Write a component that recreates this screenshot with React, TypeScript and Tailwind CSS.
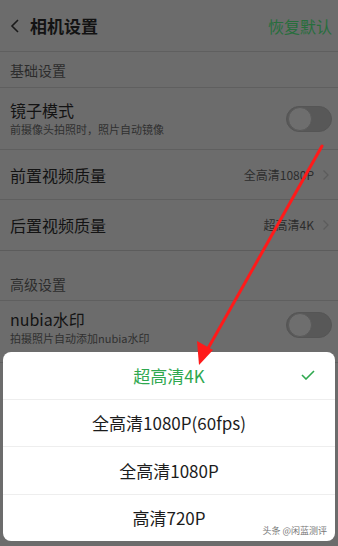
import React from "react";

// dimmed settings page with quality picker sheet on top

function Toggle() {
  return (
    <div className="w-[46px] h-[26px] rounded-full bg-[#585858] border border-[#555] flex items-center p-[1px]">
      <div className="w-[24px] h-[24px] rounded-full bg-[#6e6e6e] border border-[#5a5a5a]" />
    </div>
  );
}

function Chevron() {
  return (
    <svg width="8" height="12" viewBox="0 0 8 12" className="ml-[8px]">
      <path d="M1.5 1.5 L6 6 L1.5 10.5" fill="none" stroke="#5c5c5c" strokeWidth="1.3" />
    </svg>
  );
}

export default function App() {
  const options = [
    { label: "超高清4K", active: true },
    { label: "全高清1080P(60fps)", active: false },
    { label: "全高清1080P", active: false },
    { label: "高清720P", active: false },
  ];

  return (
    <div
      className="relative w-[338px] h-[546px] overflow-hidden bg-[#6c6c6c] text-[#131313]"
      style={{ fontFamily: '"Noto Sans CJK SC", "Noto Sans", sans-serif' }}
    >
      {/* header */}
      <div className="h-[52px] flex items-center justify-between pl-[10px] pr-[6px] border-b border-[#5f5f5f]">
        <div className="flex items-center gap-[10px]">
          <svg width="10" height="16" viewBox="0 0 10 16">
            <path d="M8 2 L2 8 L8 14" fill="none" stroke="#1a1a1a" strokeWidth="1.6" />
          </svg>
          <span className="text-[17px] font-bold leading-none">相机设置</span>
        </div>
        <span className="text-[16px] text-[#276e3c] leading-none">恢复默认</span>
      </div>

      {/* basic */}
      <div className="h-[36px] flex items-center px-[10px] border-b border-[#5f5f5f]">
        <span className="text-[14px] text-[#2c2c2c] leading-none">基础设置</span>
      </div>
      <div className="h-[62px] flex items-center justify-between pl-[10px] pr-[6px] border-b border-[#5f5f5f]">
        <div className="flex flex-col gap-[6px]">
          <span className="text-[16px] leading-none">镜子模式</span>
          <span className="text-[11px] text-[#303030] leading-none">前摄像头拍照时，照片自动镜像</span>
        </div>
        <Toggle />
      </div>
      <div className="h-[50px] flex items-center justify-between pl-[10px] pr-[8px] border-b border-[#5f5f5f]">
        <span className="text-[16px] leading-none">前置视频质量</span>
        <div className="flex items-center">
          <span className="text-[12px] text-[#2c2c2c] leading-none">全高清1080P</span>
          <Chevron />
        </div>
      </div>
      <div className="h-[51px] flex items-center justify-between pl-[10px] pr-[8px] border-b border-[#5c5c5c]">
        <span className="text-[16px] leading-none">后置视频质量</span>
        <div className="flex items-center">
          <span className="text-[12px] text-[#2c2c2c] leading-none">超高清4K</span>
          <Chevron />
        </div>
      </div>

      {/* advanced */}
      <div className="h-[50px] flex items-end pb-[9px] px-[10px] border-b border-[#5f5f5f]">
        <span className="text-[14px] text-[#2c2c2c] leading-none">高级设置</span>
      </div>
      <div className="h-[62px] flex items-center justify-between pl-[10px] pr-[6px] border-b border-[#5f5f5f]">
        <div className="flex flex-col gap-[6px] -mt-[8px]">
          <span className="text-[16px] leading-none">nubia水印</span>
          <span className="text-[11px] text-[#303030] leading-none">拍摄照片自动添加nubia水印</span>
        </div>
        <div className="-mt-[14px]">
          <Toggle />
        </div>
      </div>
      <div className="h-[50px] flex items-center px-[10px]">
        <span className="text-[16px] leading-none">保存位置</span>
      </div>

      {/* picker sheet */}
      <div className="absolute left-[3px] right-[3px] top-[352px] h-[189px] bg-white rounded-[8px] flex flex-col">
        {options.map((o, i) => (
          <div
            key={o.label}
            className={
              "relative flex-1 flex items-center justify-center " +
              (i < options.length - 1 ? "border-b border-[#eeeeee]" : "")
            }
          >
            <span
              className={
                "text-[17px] leading-none " + (o.active ? "text-[#2fa84f]" : "text-[#1c1c1c]")
              }
            >
              {o.label}
            </span>
            {o.active && (
              <svg
                width="14"
                height="10"
                viewBox="0 0 14 10"
                className="absolute right-[20px] top-1/2 -translate-y-1/2"
              >
                <path d="M1 5 L5 9 L13 1" fill="none" stroke="#2fa84f" strokeWidth="1.6" />
              </svg>
            )}
          </div>
        ))}
        <span className="absolute right-[8px] bottom-[6px] text-[9px] text-[#777] leading-none">
          头条 @闲蓝测评
        </span>
      </div>

      {/* red annotation arrow */}
      <svg className="absolute left-0 top-0 pointer-events-none" width="338" height="546" viewBox="0 0 338 546">
        <line x1="322" y1="146" x2="206" y2="352" stroke="#ff1a1a" strokeWidth="3" strokeLinecap="round" />
        <polygon points="199,365 197,341 213,350" fill="#ff1a1a" />
      </svg>
    </div>
  );
}
